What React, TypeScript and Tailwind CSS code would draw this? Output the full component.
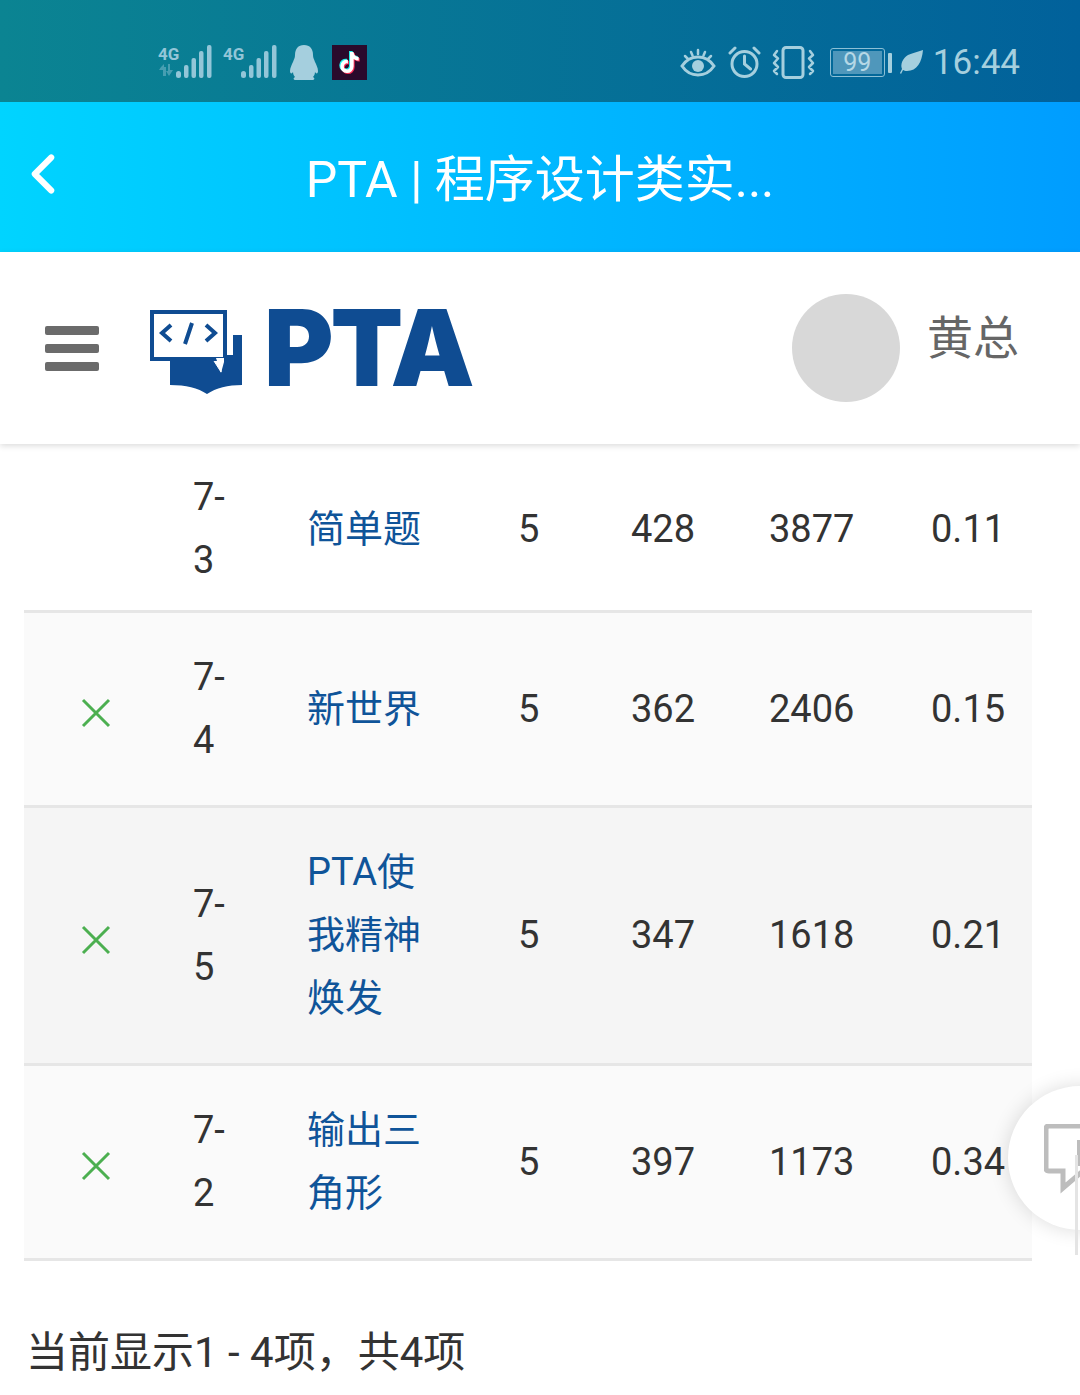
import { ChevronLeft } from 'lucide-react';
import { FaTiktok } from 'react-icons/fa6';

const FONT = "font-['Roboto','Noto_Sans_CJK_SC',sans-serif]";

type Row = {
  id: string;
  lines: string[];
  score: string;
  passed: string;
  total: string;
  rate: string;
  rowClass: string;
  showMark: boolean;
};

const rows: Row[] = [
  { id: '3', lines: ['简单题'], score: '5', passed: '428', total: '3877', rate: '0.11', rowClass: 'h-[169px] pt-[4px] bg-white', showMark: false },
  { id: '4', lines: ['新世界'], score: '5', passed: '362', total: '2406', rate: '0.15', rowClass: 'h-[195px] bg-[#fafafa]', showMark: true },
  { id: '5', lines: ['PTA使', '我精神', '焕发'], score: '5', passed: '347', total: '1618', rate: '0.21', rowClass: 'h-[258px] bg-[#f5f5f5]', showMark: true },
  { id: '2', lines: ['输出三', '角形'], score: '5', passed: '397', total: '1173', rate: '0.34', rowClass: 'h-[195px] bg-[#fafafa]', showMark: true }
];

function Signal({ arrows }: { arrows?: boolean }) {
  return (
    <svg width="54" height="36" viewBox="0 0 54 36" className="block text-[#93c6d8]" fill="currentColor">
      <text x="0" y="15" fontFamily="Liberation Sans Narrow, Roboto, sans-serif" fontWeight="700" fontSize="17">4G</text>
      {arrows ? <path d="M3 22l3-3v3h2v9H5v-6H1zm7-3h2v6h3l-4 6-3-5h2z" opacity="0.45" /> : null}
      <rect x="18" y="26" width="5" height="7" rx="2.5" />
      <rect x="26" y="20" width="4.5" height="13" rx="2" />
      <rect x="33.5" y="13" width="4.5" height="20" rx="2" />
      <rect x="41" y="6" width="4.5" height="27" rx="2" />
      <rect x="49" y="0" width="4.5" height="33" rx="2" />
    </svg>
  );
}

function Penguin() {
  return (
    <svg width="30" height="36" viewBox="0 0 30 36" className="block" fill="#a5cfde">
      <path d="M15 0c6 0 9 4 9 10 0 3 1 4 2 7 1 2 3 6 3 9 0 3-2 3-3 1 0 2-1 4-2 5 2 1 2 3-1 3h-5c-2 0-4 0-6 0H7c-3 0-3-2-1-3-1-1-2-3-2-5-1 2-3 2-3-1 0-3 2-7 3-9 1-3 2-4 2-7C6 4 9 0 15 0z" />
    </svg>
  );
}

function TikTokTile() {
  return (
    <div className="relative flex h-[35px] w-[35px] items-center justify-center bg-[#2a0a2c]">
      <FaTiktok className="absolute ml-[-2px] mt-[-2px] text-[21px] text-[#25f4ee]" />
      <FaTiktok className="absolute ml-[2px] mt-[2px] text-[21px] text-[#fe2c55]" />
      <FaTiktok className="absolute text-[21px] text-white" />
    </div>
  );
}

function EyeIcon() {
  return (
    <svg width="36" height="30" viewBox="0 0 36 30" className="block" fill="none" stroke="#a5cfde" strokeWidth="3" strokeLinecap="round">
      <path d="M2 18c4-6 10-9 16-9s12 3 16 9c-4 6-10 9-16 9S6 24 2 18z" />
      <circle cx="18" cy="18" r="6" fill="#a5cfde" stroke="none" />
      <path d="M5 8l3 3M18 2v4M31 8l-3 3M11 4l1.5 3.5M25 4l-1.5 3.5" strokeWidth="2.5" />
    </svg>
  );
}

function AlarmIcon() {
  return (
    <svg width="33" height="33" viewBox="0 0 33 33" className="block" fill="none" stroke="#a5cfde" strokeWidth="3" strokeLinecap="round">
      <circle cx="16.5" cy="18" r="12.5" />
      <path d="M16.5 10v8l6 5M2 7l5-5M31 7l-5-5" />
    </svg>
  );
}

function VibrateIcon() {
  return (
    <svg width="43" height="33" viewBox="0 0 43 33" className="block" fill="none" stroke="#a5cfde" strokeWidth="3" strokeLinecap="round" strokeLinejoin="round">
      <rect x="11" y="1.5" width="20" height="30" rx="3" />
      <path d="M5 5L2 9l4 3.5L2 17l4 4-4 4 3 3M38 5l3 4-4 3.5 4 4.5-4 4 4 4-3 3" strokeWidth="2.5" />
    </svg>
  );
}

function Battery() {
  return (
    <div className="flex items-center gap-[3px]">
      <div className="flex h-[29px] w-[55px] rounded-[3px] border-[1.5px] border-[#8cc0d6] p-[2px]">
        <div className={`flex flex-1 items-center justify-center bg-[#4f97bb] text-[25px] leading-none text-[#b5d8e6] ${FONT}`}>99</div>
      </div>
      <div className="h-[20px] w-[4px] rounded-[1px] bg-[#a5cfde]" />
    </div>
  );
}

function Leaf() {
  return (
    <svg width="23" height="25" viewBox="0 0 23 25" className="block">
      <path d="M23 0C22 12 17 21 7 21c-2 0-3-.5-4-1l-2 4-1-1 2-4C0 14 3 8 8 5c4-2 10-3 15-5z" fill="#a5cfde" />
    </svg>
  );
}

function StatusBar() {
  return (
    <div className="flex h-[102px] items-start justify-between bg-[linear-gradient(90deg,#0b8492,#01619b)] pl-[158px] pr-[60px] pt-[45px]">
      <div className="flex items-start">
        <Signal arrows />
        <div className="ml-[11px]">
          <Signal />
        </div>
        <div className="ml-[12px]">
          <Penguin />
        </div>
        <div className="ml-[13px]">
          <TikTokTile />
        </div>
      </div>
      <div className="flex h-[35px] items-center">
        <EyeIcon />
        <div className="ml-[12px]">
          <AlarmIcon />
        </div>
        <div className="ml-[11px]">
          <VibrateIcon />
        </div>
        <div className="ml-[15px]">
          <Battery />
        </div>
        <div className="ml-[8px]">
          <Leaf />
        </div>
        <div className={`ml-[10px] text-[35px] leading-none text-[#a5cfde] ${FONT}`}>16:44</div>
      </div>
    </div>
  );
}

function NavBar() {
  return (
    <div className="relative flex h-[150px] items-center justify-center bg-[linear-gradient(90deg,#00d4ff,#009dff)]">
      <ChevronLeft strokeWidth={2.2} className="absolute left-[10px] top-[39px] h-[66px] w-[66px] text-white" />
      <div className={`mt-[6px] text-[50px] leading-none text-white ${FONT}`}>PTA | 程序设计类实...</div>
    </div>
  );
}

function LogoMark() {
  return (
    <svg width="93" height="85" viewBox="0 0 93 85" className="block">
      <path d="M83 25h9v50c-14 0-26 3-35 9-9-6-21-9-37-9V45h63z" fill="#0f4c92" />
      <path d="M0 0h77v51H0z" fill="#fff" />
      <path d="M0 0h77v51H0zM4 4v43h69V4z" fill="#0f4c92" fillRule="evenodd" />
      <path d="M66 48h8v4l-3 11z" fill="#fff" />
      <path d="M64 51l7 11V51" fill="#fff" stroke="#fff" strokeWidth="1" />
      <path d="M21 15L12 23l9 8M56 15l9 8-9 8M42 13l-7 21" fill="none" stroke="#0f4c92" strokeWidth="4" />
    </svg>
  );
}

function Header() {
  return (
    <div className="relative z-10 flex h-[192px] items-center bg-white pl-[45px] shadow-[0_2px_6px_rgba(0,0,0,0.14)]">
      <div className="flex w-[54px] flex-col gap-[9px]">
        <div className="h-[9px] rounded-[2px] bg-[#6b6b6b]" />
        <div className="h-[9px] rounded-[2px] bg-[#6b6b6b]" />
        <div className="h-[9px] rounded-[2px] bg-[#6b6b6b]" />
      </div>
      <div className="ml-[51px] mt-[8px]">
        <LogoMark />
      </div>
      <div className="ml-[21px] font-['Inter',sans-serif] text-[106px] font-black leading-none tracking-[-3px] text-[#0f4c92]">PTA</div>
      <div className="ml-auto mr-[180px] h-[108px] w-[108px] rounded-full bg-[#d8d8d8]" />
      <div className={`absolute right-[61px] top-[63px] text-[46px] leading-none text-[#666] ${FONT}`}>黄总</div>
    </div>
  );
}

function Mark() {
  return (
    <svg width="30" height="30" viewBox="0 0 30 30" className="block">
      <path d="M2 2l26 26M28 2L2 28" fill="none" stroke="#4caf50" strokeWidth="3" />
    </svg>
  );
}

function ResultRow({ row }: { row: Row }) {
  return (
    <div className={`grid grid-cols-[169px_114px_211px_113px_138px_162px_101px] items-center border-b-[3px] border-[#e6e6e6] text-[38px] leading-[63px] text-[#333] ${row.rowClass}`}>
      <div className="flex justify-center pr-[25px] pt-[8px]">{row.showMark ? <Mark /> : null}</div>
      <div>
        <div>7-</div>
        <div>{row.id}</div>
      </div>
      <div className="text-[#0f5499]">
        {row.lines.map((line) => (
          <div key={line}>{line}</div>
        ))}
      </div>
      <div>{row.score}</div>
      <div>{row.passed}</div>
      <div>{row.total}</div>
      <div>{row.rate}</div>
    </div>
  );
}

function FloatingButton() {
  return (
    <div className="absolute left-[1008px] top-[1086px] h-[144px] w-[144px] rounded-full bg-white shadow-[0_0_20px_rgba(0,0,0,0.14)]">
      <svg width="40" height="70" viewBox="0 0 40 70" className="absolute left-[36px] top-[38px]" fill="none">
        <path d="M40 2H5Q2 2 2 5v39q0 3 3 3h14v17l20-17" stroke="#bdbdbd" strokeWidth="5" />
        <rect x="33" y="16" width="7" height="26" fill="#bdbdbd" />
      </svg>
    </div>
  );
}

export default function App() {
  return (
    <div className={`relative h-[1395px] w-[1080px] overflow-hidden bg-white ${FONT}`}>
      <StatusBar />
      <NavBar />
      <Header />
      <div className="px-[24px] pr-[48px]">
        {rows.map((row) => (
          <ResultRow key={row.id} row={row} />
        ))}
        <div className="mt-[71px] pl-[2px] text-[42px] leading-none text-[#333]">当前显示1 - 4项，共4项</div>
      </div>
      <FloatingButton />
      <div className="absolute left-[1075px] top-[1155px] h-[100px] w-[3px] bg-[#e4e4e4]" />
    </div>
  );
}
